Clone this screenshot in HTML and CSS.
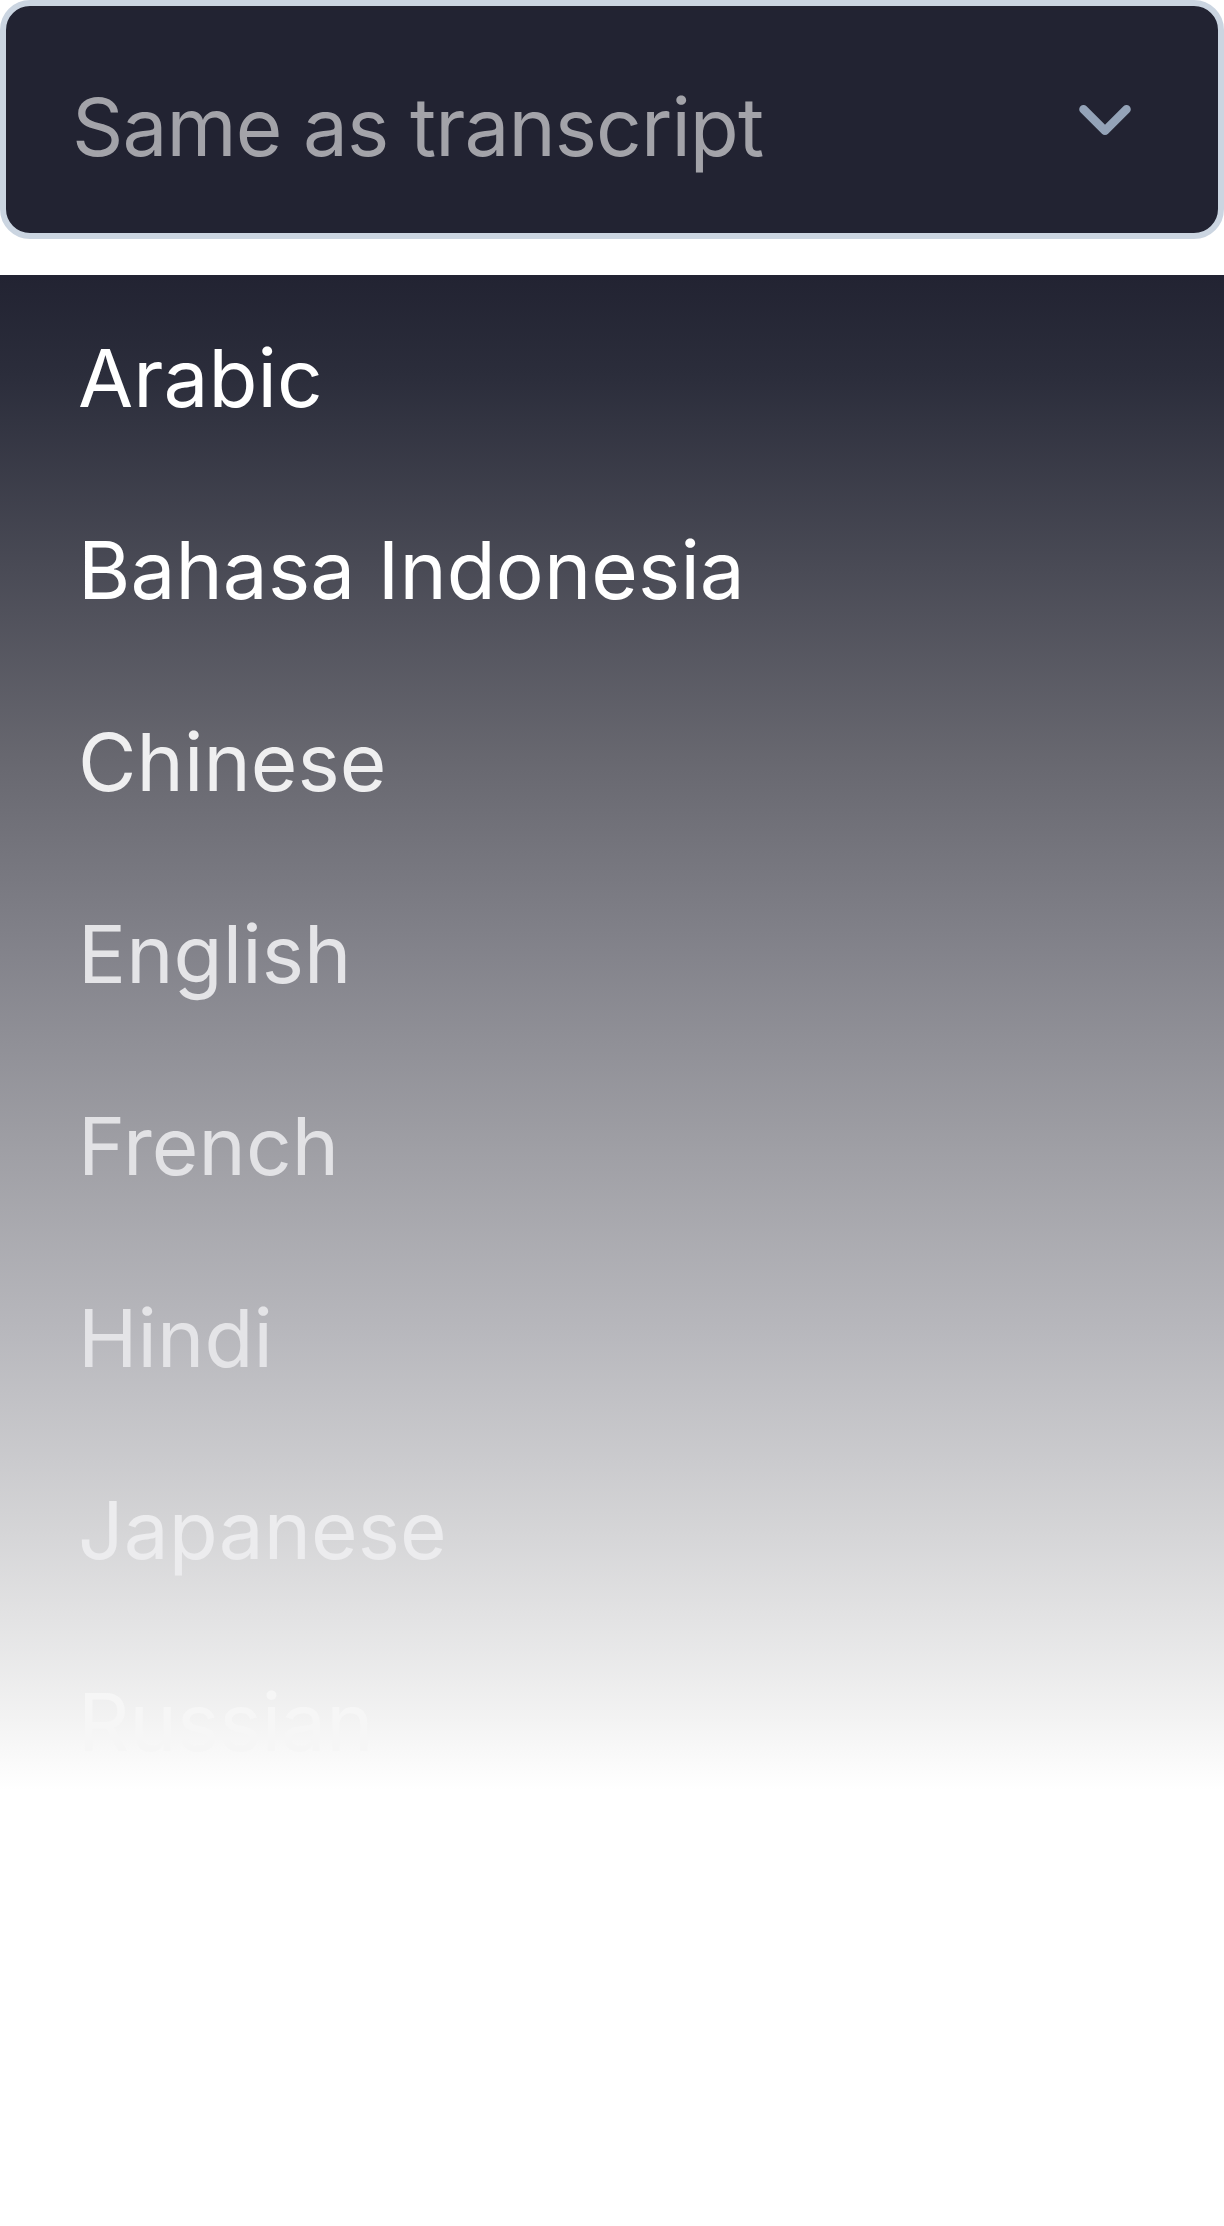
FILE: index.html
```html
<!DOCTYPE html>
<html lang="en">
<head>
<meta charset="utf-8">
<title>Language select</title>
<link rel="stylesheet" href="styles.css">
</head>
<body>
  <div class="select">
    <span class="select-value">Same as transcript</span>
    <svg class="chevron" viewBox="0 0 24 24" width="86" height="86" fill="none" stroke="currentColor" stroke-width="2.4" stroke-linecap="round" stroke-linejoin="round" aria-hidden="true"><path d="m6 9 6 6 6-6"/></svg>
  </div>
  <ul class="menu">
    <li class="item item-1">Arabic</li>
    <li class="item item-2">Bahasa Indonesia</li>
    <li class="item item-3">Chinese</li>
    <li class="item item-4">English</li>
    <li class="item item-5">French</li>
    <li class="item item-6">Hindi</li>
    <li class="item item-7">Japanese</li>
    <li class="item item-8">Russian</li>
  </ul>
</body>
</html>
```
FILE: styles.css
```css
html, body {
  margin: 0;
  padding: 0;
  background: #ffffff;
}
body {
  font-family: Inter, "Noto Sans", "Liberation Sans", sans-serif;
  width: 1224px;
  height: 2226px;
  overflow: hidden;
}
.select {
  box-sizing: border-box;
  height: 239px;
  background: #222332;
  border: 6px solid #cbd5e1;
  border-radius: 30px;
  display: flex;
  align-items: center;
  justify-content: space-between;
  padding: 0 70px 0 66px;
}
.select-value {
  font-size: 80px;
  line-height: 96px;
  padding-top: 14px;
  color: #a3a3a9;
  letter-spacing: -0.9px;
}
.chevron {
  color: #94a3b8;
  display: block;
}
.menu {
  list-style: none;
  margin: 36px 0 0;
  padding: 7px 0 0;
  height: 1560px;
  background: linear-gradient(180deg,
    #222332 0px,
    #2b2d3b 100px,
    #67676f 480px,
    #82828a 670px,
    #9d9da3 860px,
    #b8b8bd 1060px,
    #d4d4d6 1250px,
    #f2f2f2 1440px,
    #ffffff 1515px);
}
.item {
  font-size: 80px;
  line-height: 96px;
  padding: 48px 0 48px 78px;
  color: #e4e4e7;
  letter-spacing: 0.1px;
}
.item-1, .item-2 { color: #ffffff; }
.item-3 { color: #efeff0; }
.item-5 { color: #e2e2e5; }
.item-7 { color: #ececee; }
.item-8 { color: #f6f6f6; }
```
